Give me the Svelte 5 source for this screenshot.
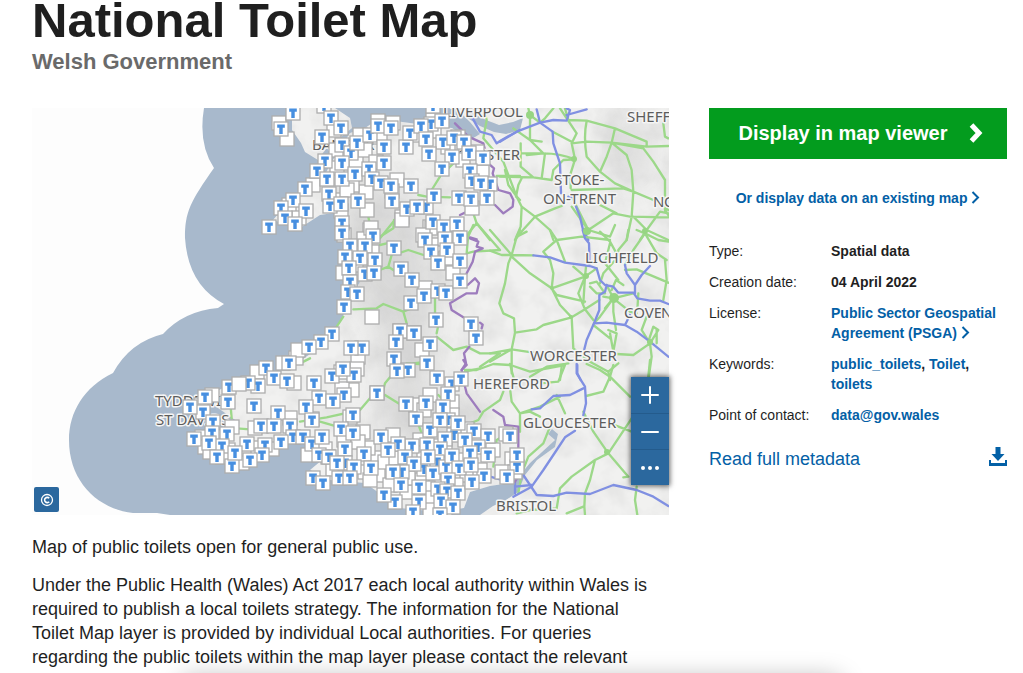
<script>
  const plain = '279,123 287,139 313,185 378,121 366,192 367,210 402,217 397,180 463,160 477,152 472,208 482,172 370,230 430,227 356,163 352,185 380,137 433,120 358,357 343,273 364,239 371,228 453,273 422,350 425,288 402,220 432,228 357,369 296,358 212,395 257,372 294,383 232,427 290,418 202,437 205,447 308,455 283,363 298,350 255,428 210,452 352,390 363,432 393,435 375,458 378,475 390,485 422,480 368,448 289,205 299,218 393,123 334,130 336,150 337,168 334,200 415,135 434,131 448,147 458,137 423,235 437,245 446,258 372,252 356,265 344,235 341,211 365,150 347,190 376,162 392,191 360,135 344,440 358,442 325,449 333,469 346,470 365,472 402,450 420,440 433,446 424,453 445,450 436,480 448,472 462,460 467,475 456,485 428,488 432,498 445,510 430,510 407,492 385,462 396,458 408,478 370,480 342,389 416,405 430,395 452,402 424,410 452,415 467,429 506,434 512,459 502,472 515,472 493,450 480,470 228,450 242,463 258,448 272,449 218,437 201,405 223,457 341,372 350,417 400,331 414,333 312,419 377,393'.split(' ').map((p) => p.split(','));

  const marks = '293,113 281,129 324,106 433,106 331,118 341,128 322,137 342,145 351,153 357,143 325,161 342,163 317,171 327,179 342,179 355,174 305,189 329,194 330,206 341,204 358,201 293,200 281,208 306,211 285,218 295,224 269,227 342,223 342,233 370,135 378,126 391,128 384,147 384,163 369,169 372,179 381,183 391,186 411,186 392,201 407,209 426,207 417,207 434,196 406,147 410,133 431,124 421,126 442,121 426,139 443,142 454,138 464,142 469,153 483,158 429,154 452,157 442,169 470,171 472,181 490,184 481,183 459,198 471,199 487,198 433,222 444,227 457,224 373,236 350,246 365,246 345,257 360,258 375,260 394,248 349,268 365,274 374,273 350,282 348,292 357,294 344,307 401,269 412,280 411,303 424,296 438,291 446,293 436,320 460,281 425,240 445,239 460,238 431,252 447,250 438,263 460,261 471,324 476,338 400,331 396,342 414,333 430,344 332,334 321,342 309,347 362,348 351,348 289,363 266,368 274,378 287,381 314,383 258,386 248,383 229,387 228,402 205,397 203,412 190,407 254,406 319,398 306,407 278,413 312,420 261,426 274,426 290,426 213,422 212,433 227,434 194,439 222,446 209,443 247,444 265,445 293,437 281,442 303,437 312,444 322,437 217,457 262,455 250,460 232,466 235,453 328,457 319,455 313,478 323,483 394,359 427,363 408,370 397,371 437,378 452,384 461,379 448,394 443,407 426,403 406,404 377,393 332,376 354,375 343,369 344,395 333,401 416,419 430,430 448,420 440,420 454,435 458,423 474,431 488,436 510,436 445,439 440,449 427,445 412,446 398,444 381,437 388,450 405,457 424,469 414,464 437,462 428,457 433,473 446,467 452,456 478,447 465,440 459,468 470,453 488,455 484,476 471,465 402,472 393,472 401,485 419,487 448,480 438,489 447,491 441,501 458,493 472,482 453,507 419,502 395,502 384,495 413,512 440,515 353,415 341,429 353,433 345,449 364,454 329,457 345,463 337,463 354,467 371,468 339,478 350,478 517,467 517,455 507,477'.split(' ').map((p) => p.split(','));

  const tiles = [
    {
      at: 'translate(500 100) scale(.33333)',
      green: 'M160 25L135 55L120 68L90 45L85 25M90 45L90 120L130 160L60 160M40 85L90 120L125 125M80 165L130 160Q180 160 225 178L190 180L160 210L155 240L100 232L0 230M135 160L125 235M62 130L62 200L100 232M225 178L215 130L260 125L335 128L440 140L505 138M158 95L215 125M195 25L205 60L260 62L345 85L440 125V140M180 25L230 100L215 130M260 62Q250 110 260 170L300 215M345 85L335 128L320 170L300 215L345 250L400 275M335 128L380 165L395 210L400 275L395 350L380 420M335 128L430 145L460 185L495 240V330L505 345M215 270L370 265L400 275L460 300L505 330M225 178L212 220V265M15 210L25 255L50 290L65 320L62 380L45 420M48 290L55 255L65 235M65 320L105 350L165 325L185 318M105 350L60 400L45 420M105 350L150 390L160 420M265 390L235 330L215 290M265 390L340 340L390 350L505 352M265 390L330 410L345 375M300 315L350 340M440 390L400 350M440 390L505 420M440 390L480 335L505 340M440 390L420 420M490 70L495 110L505 115M265 390L215 320',
      blue: 'M0 125L50 95L120 68L160 60L200 62L210 30L200 25M200 45L260 28M110 28L120 68L158 95L160 130L180 190L183 280M205 290L218 292M228 320L240 350L248 385L265 420',
      purple: ''
    },
    {
      at: 'translate(490 230) scale(.33333)',
      green: 'M65 75L0 0M65 75H35L0 62M65 75L80 20L90 0M65 75L130 76M80 20L110 5M65 75L55 100L45 160L28 220L40 250L72 265L75 308L65 358V430M65 80L120 130L185 175L210 225L245 262M75 308L140 298L160 285L245 262M0 370L65 358L130 368M0 395L65 358M185 175L190 130L180 90L160 65L200 30L275 20L360 30M200 30L180 0M200 30L225 95M185 175L285 140L320 115M185 175L200 195L285 215M245 262L285 238L328 210M245 262L250 355M285 140L250 110M285 140L288 110M285 140L265 190L285 238L310 270M285 140L280 220M385 80L360 35L330 5M360 40L345 100L385 150M385 80L340 130L330 160M370 205L330 260L312 280M370 205V245L378 300M370 205L420 245L440 250M370 205L350 165M370 205L430 190M370 205L340 200M370 205L345 235M365 180L378 150L400 165M300 160L320 155L345 190L320 190L300 170M465 10L430 60L405 105M465 10L505 30L535 35M465 10L440 0M465 10L500 70L530 90M415 0L410 30L385 60V80M405 120L440 118L535 158M525 90L530 150L520 210M480 340L455 300L470 260M480 340L430 375L380 372M480 340L485 380L475 450M480 340L505 300L490 290L475 335M500 300V340M355 300L380 310L370 365L360 310M310 285L360 325M120 440L170 410L235 400M300 395L355 425L360 450M355 425L385 400M210 450L215 410M250 355L300 395M445 190L442 240',
      blue: 'M130 76L180 82L225 98L300 108L320 115L330 150L345 165L370 170L385 188H430L442 205L480 212H510L535 222M278 0L285 25L297 40L298 70V108M405 105L410 130L435 165V190M480 108L455 135L435 165M350 165L345 185L328 195V240L312 280L290 330L283 358M312 280L350 278L405 285L440 305L480 335L535 380M420 255L405 285M262 405V430L272 450',
      purple: ''
    },
    {
      at: 'translate(450 360) scale(.33333)',
      green: 'M345 15L325 65L270 70M345 15L240 35L190 18M180 12L195 70L180 85L185 125L210 160L270 140L330 110M320 105L345 160M160 95L150 120L100 155L85 180L60 190M210 160V215M210 160L240 155L270 170M45 30H80L130 12L180 15M410 12L450 30L480 50L540 110M480 50L490 15M480 50L460 95L408 108M600 0L595 50M400 155L430 215L475 280L535 350L520 352M475 280L545 175M475 280L435 300L365 350L330 385L320 445M435 300L420 360L405 400L403 440L405 465M400 440L350 460M480 190L545 215M560 380L555 420L562 465M300 200L280 250L235 290L215 340L205 400M130 320L140 240L165 225M10 130L5 180M200 460L240 450L320 445',
      blue: 'M380 12V40L405 80L408 130L400 165M400 85L360 105L310 108L270 145L245 148M375 212L345 232L320 270L280 330L245 380L190 410M220 345L260 405L310 408L350 398L420 402L490 375L560 390L610 410L655 438M195 380L245 375M195 365V400M120 350L150 358',
      purple: 'M40 0L50 15L35 30L40 60L50 100L90 155M130 150L160 170L165 195L205 200V350L195 365'
    },
    {
      at: 'translate(320 220) scale(.33333)',
      green: 'M470 10L445 40L440 100L460 95L540 90M470 10L540 90M180 50L220 25L222 0M180 75L200 70M235 100L265 90L320 108L410 130M215 105L205 140L180 150M205 140L235 160M100 268L170 265L190 252L250 275L260 310M250 275L280 262M345 225V280M350 350L400 390L440 380L480 400L540 400L480 440M350 340L358 300M70 290L50 320M260 430L300 432',
      blue: '',
      purple: 'M450 55L475 65L470 80L488 85L465 95L458 125L440 160M443 195L465 175L477 190L470 220L440 220L390 250L395 270L430 292M480 308L488 314L485 325M448 380L432 400L438 430L425 450'
    },
    {
      at: 'translate(340 100) scale(.33333)',
      green: 'M425 0L440 60L430 115L490 185L530 290L540 300M470 228L540 228M400 340L410 370L450 420M380 420L400 375M275 270L300 230M235 285L260 290L330 292M85 350L90 375M120 415L160 365M340 190L320 210',
      blue: 'M398 55L420 95L455 105L470 130L485 120L540 90',
      purple: 'M345 70L385 110L430 130L445 190L462 205L458 220L475 270L510 280L520 300L518 320L490 340L465 315M360 345L375 338M390 412L410 418'
    },
    {
      at: 'translate(300 340) scale(.33333)',
      green: 'M0 245L80 232L180 210L210 175L250 150L255 130L280 100M60 245L120 262M255 165L295 190L310 195M340 70L380 65M415 165L430 180M460 180L458 220M350 240L365 280M0 70L30 55M495 95L540 85M-190 265L-150 268M-208 200L-205 235',
      blue: '',
      purple: ''
    }
  ];

  const towns = [
    [443, 117, 'LIVERPOOL'], [627, 122, 'SHEFF'], [457, 160, 'CHESTER'],
    [554, 185, 'STOKE-'], [543, 204, 'ON-TRENT'], [653, 207, 'N'],
    [585, 263, 'LICHFIELD'], [624, 318, 'COVE'], [530, 361, 'WORCESTER'],
    [473, 389, 'HEREFORD'], [523, 428, 'GLOUCESTER'], [496, 511, 'BRISTOL'],
    [155, 406, 'TYDDEWI /'], [156, 425, 'ST DAVIDS'], [312, 150, 'BANGOR']
  ];
</script>

<main class="page">
  <header>
    <h1>National Toilet Map</h1>
    <p class="owner">Welsh Government</p>
  </header>

  <div class="columns">
    <section class="content">
      <div class="map">
        <svg class="canvas" viewBox="32 108 637 407" role="img" aria-label="Map of public toilets in Wales">
          <defs>
            <clipPath id="land">
              <path d="M669 108H456L470 122L480 134L470 140L452 128L440 127L410 123L395 121L380 118L365 128L350 133L340 148L330 165L322 180L310 190L290 200L273 220L285 224L300 228L320 215L340 212L350 225L345 250L350 270L360 282L352 295L342 318L330 340L290 368L235 382L205 397L218 408L238 422L228 432L205 445L230 460L260 452L290 442L310 445L322 460L310 470L330 480L365 483L382 495L400 508L440 512L464 508L470 492L490 486L510 483L520 475L530 463L542 452L555 440L548 434L552 429L558 434L555 447L537 460L525 475L518 492L506 500L493 506L480 515H669Z" />
              <path d="M292 112L300 108H335L350 118L352 128L325 150L318 160L305 152L301 143L292 130Z" />
            </clipPath>
            <filter id="relief" x="0" y="0" width="100%" height="100%">
              <feTurbulence type="fractalNoise" baseFrequency=".035" numOctaves="4" seed="8" />
              <feColorMatrix values="0 0 0 0 .5  0 0 0 0 .5  0 0 0 0 .5  .6 0 0 0 -.24" />
            </filter>
            <filter id="soft"><feGaussianBlur stdDeviation="16" /></filter>
            <g id="box">
              <rect x="-7" y="-7" width="14" height="14" fill="#fff" stroke="#adadad" stroke-width="1.3" />
            </g>
            <g id="mark">
              <use href="#box" />
              <path d="M-3.800 -4.500H3.800V-1.200H1.700V5H-1.700V-1.200H-3.800Z" fill="#478fe0" />
            </g>
          </defs>

          <rect x="32" y="108" width="637" height="407" fill="#fdfdfd" />
          <path fill="#a8b9cc" d="M204 108Q198 144 214 168C190 202 185 212 185 238Q188 285 224 304L218 308Q184 311 163 334Q130 342 113 373C84 387 69 412 69 440C69 482 98 509 133 513L157 513L170 515H669V108Z" />
          <g clip-path="url(#land)">
            <rect x="180" y="108" width="489" height="407" fill="#f1f1f0" />
            <g filter="url(#soft)" fill="#bbb" opacity=".45">
              <ellipse cx="365" cy="230" rx="20" ry="80" />
              <ellipse cx="405" cy="300" rx="28" ry="110" />
              <ellipse cx="430" cy="420" rx="60" ry="25" />
              <ellipse cx="630" cy="150" rx="18" ry="40" />
            </g>
            <rect x="180" y="108" width="489" height="407" filter="url(#relief)" />
            <path fill="#a8b9cc" d="M473 113L486 120L499 125L513 122L523 118L520 130L506 134L494 132L480 126L466 117L466 108H474Z" />
          </g>
          {#each tiles as t}
            <g transform={t.at} class="roads">
              <path d={t.green} stroke="#9cd889" />
              <path d={t.blue} stroke="#8090e2" stroke-width="7" />
              <path d={t.purple} stroke="#9d7cbd" stroke-width="7" />
            </g>
          {/each}
          <g fill="#97d583">
            <circle cx="530" cy="115" r="4" /><circle cx="574" cy="159" r="3" />
            <circle cx="587" cy="231" r="4" /><circle cx="614" cy="298" r="5" />
            <circle cx="650" cy="342" r="3" /><circle cx="607" cy="452" r="3" />
            <circle cx="645" cy="231" r="3" /><circle cx="571" cy="317" r="2" />
            <circle cx="552" cy="288" r="2" /><circle cx="586" cy="276" r="3" />
          </g>
          <g class="towns">
            {#each towns as [x, y, name]}<text {x} {y}>{name}</text>{/each}
            <text x="664" y="207">O</text>
            <text x="661" y="318">N</text>
          </g>
          {#each plain as [x, y]}<use href="#box" {x} {y} />{/each}
          {#each marks as [x, y]}<use href="#mark" {x} {y} />{/each}
          <use href="#box" x="239" y="384" />
          <use href="#box" x="372" y="317" />
        </svg>

        <button class="copyright" aria-label="Copyright">
          <svg viewBox="0 0 14 14" width="14" height="14" fill="none" stroke="#fff">
            <circle cx="7" cy="7" r="5.5" stroke-width="1.3" />
            <path d="M9.2 5.3A2.6 2.6 0 1 0 9.2 8.7" stroke-width="1.6" />
          </svg>
        </button>
        <div class="controls">
          <button aria-label="Zoom in">
            <svg viewBox="0 0 18 18" width="18" height="18"><path d="M9 1V17M1 9H17" /></svg>
          </button>
          <button aria-label="Zoom out">
            <svg viewBox="0 0 18 18" width="18" height="18"><path d="M1 9H17" /></svg>
          </button>
          <button aria-label="More options">
            <svg viewBox="0 0 18 18" width="18" height="18"><path d="M2 9h.01M9 9h.01M16 9h.01" class="dots" /></svg>
          </button>
        </div>
      </div>

      <p>Map of public toilets open for general public use.</p>
      <p>Under the Public Health (Wales) Act 2017 each local authority within Wales is required to publish a local toilets strategy. The information for the National Toilet Map layer is provided by individual Local authorities. For queries regarding the public toilets within the map layer please contact the relevant</p>
    </section>

    <aside>
      <a class="primary" href="#viewer">
        <span>Display in map viewer</span>
        <svg viewBox="0 0 14 20" width="14" height="20" fill="none" stroke="#fff" stroke-width="5"><path d="M2.500 2L10 10L2.500 18" /></svg>
      </a>
      <p class="existing">
        <a href="#existing">Or display data on an existing map <svg class="chev" viewBox="0 0 9 13" width="9" height="13"><path d="M1.500 1L7 6.500L1.500 12" /></svg></a>
      </p>
      <dl>
        <dt>Type:</dt>
        <dd>Spatial data</dd>
        <dt>Creation date:</dt>
        <dd>04 April 2022</dd>
        <dt>License:</dt>
        <dd><a href="#license">Public Sector Geospatial Agreement (PSGA) <svg class="chev" viewBox="0 0 9 13" width="9" height="13"><path d="M1.500 1L7 6.500L1.500 12" /></svg></a></dd>
        <dt>Keywords:</dt>
        <dd><a href="#public_toilets">public_toilets</a>, <a href="#toilet">Toilet</a>, <a href="#toilets">toilets</a></dd>
        <dt>Point of contact:</dt>
        <dd><a href="mailto:data@gov.wales">data@gov.wales</a></dd>
      </dl>
      <div class="metadata">
        <a href="#metadata">Read full metadata</a>
        <a href="#download" aria-label="Download metadata">
          <svg viewBox="0 0 18 19" width="18" height="19" fill="#0360a6"><path d="M6.500 0h5v7h4L9 14L2.500 7h4zM0 13h2v3h14v-3h2v6H0z" /></svg>
        </a>
      </div>
    </aside>
  </div>
  <div class="edge"></div>
</main>

<style>
  :global(body) { margin: 0; background: #fff; }
  .page {
    padding: 0 16px 0 32px;
    color: #1f1f1f;
    font-family: "Liberation Sans", Arial, sans-serif;
    font-size: 18px;
    line-height: 24px;
  }
  h1 { margin: 0; font-size: 49px; line-height: 40px; }
  .owner { margin: 0; padding-top: 8px; color: #6a6a6a; font-size: 22px; font-weight: 700; line-height: 28px; }
  .columns {
    display: grid;
    grid-template-columns: minmax(0, 1fr) 298px;
    gap: 40px;
    margin-top: 32px;
  }
  .content p { margin: 0 8px 14px 0; }
  .map { position: relative; margin-bottom: 20px; }
  .canvas { display: block; width: 100%; height: auto; }
  .roads { fill: none; stroke-width: 7; stroke-linejoin: round; stroke-linecap: round; }
  .towns {
    font-family: "Noto Sans", sans-serif;
    font-size: 15px;
    fill: #5d5d5d;
    stroke: #f5f5f5;
    stroke-width: 3px;
    stroke-linejoin: round;
    paint-order: stroke;
  }
  button {
    display: grid;
    place-items: center;
    padding: 0;
    border: 0;
    background: #2b689e;
    cursor: pointer;
  }
  .copyright { position: absolute; left: 2px; bottom: 3px; width: 25px; height: 25px; border-radius: 2px; }
  .controls {
    position: absolute;
    right: 0;
    bottom: 30px;
    width: 38px;
    box-shadow: 0 0 5px 1px #0009;
  }
  .controls button { width: 100%; height: 36px; }
  .controls button + button { border-top: 1px solid #245b8c; }
  .controls path { fill: none; stroke: #fff; stroke-width: 2; stroke-linecap: round; }
  .controls .dots { stroke-width: 4; }
  a { color: #0360a6; text-decoration: none; }
  aside { font-size: 14px; line-height: 20px; }
  .primary {
    display: flex;
    align-items: center;
    justify-content: center;
    gap: 22px;
    padding: 13px 20px 14px 26px;
    background: #039c1e;
    color: #fff;
    font-size: 20px;
    font-weight: 700;
    line-height: 24px;
  }
  .existing { margin: 29px 0 33px; text-align: center; font-weight: 700; }
  .chev { fill: none; stroke: currentColor; stroke-width: 2; vertical-align: -1px; }
  dl {
    display: grid;
    grid-template-columns: 122px minmax(0, 1fr);
    row-gap: 11px;
    margin: 0;
  }
  dd { margin: 0; font-weight: 700; }
  .metadata {
    display: flex;
    justify-content: space-between;
    margin-top: 22px;
    font-size: 18px;
    line-height: 24px;
  }
  .edge {
    position: fixed;
    left: 18%;
    right: 18%;
    bottom: -24px;
    height: 16px;
    border-radius: 8px;
    box-shadow: 0 0 24px 4px #0004;
  }
</style>
